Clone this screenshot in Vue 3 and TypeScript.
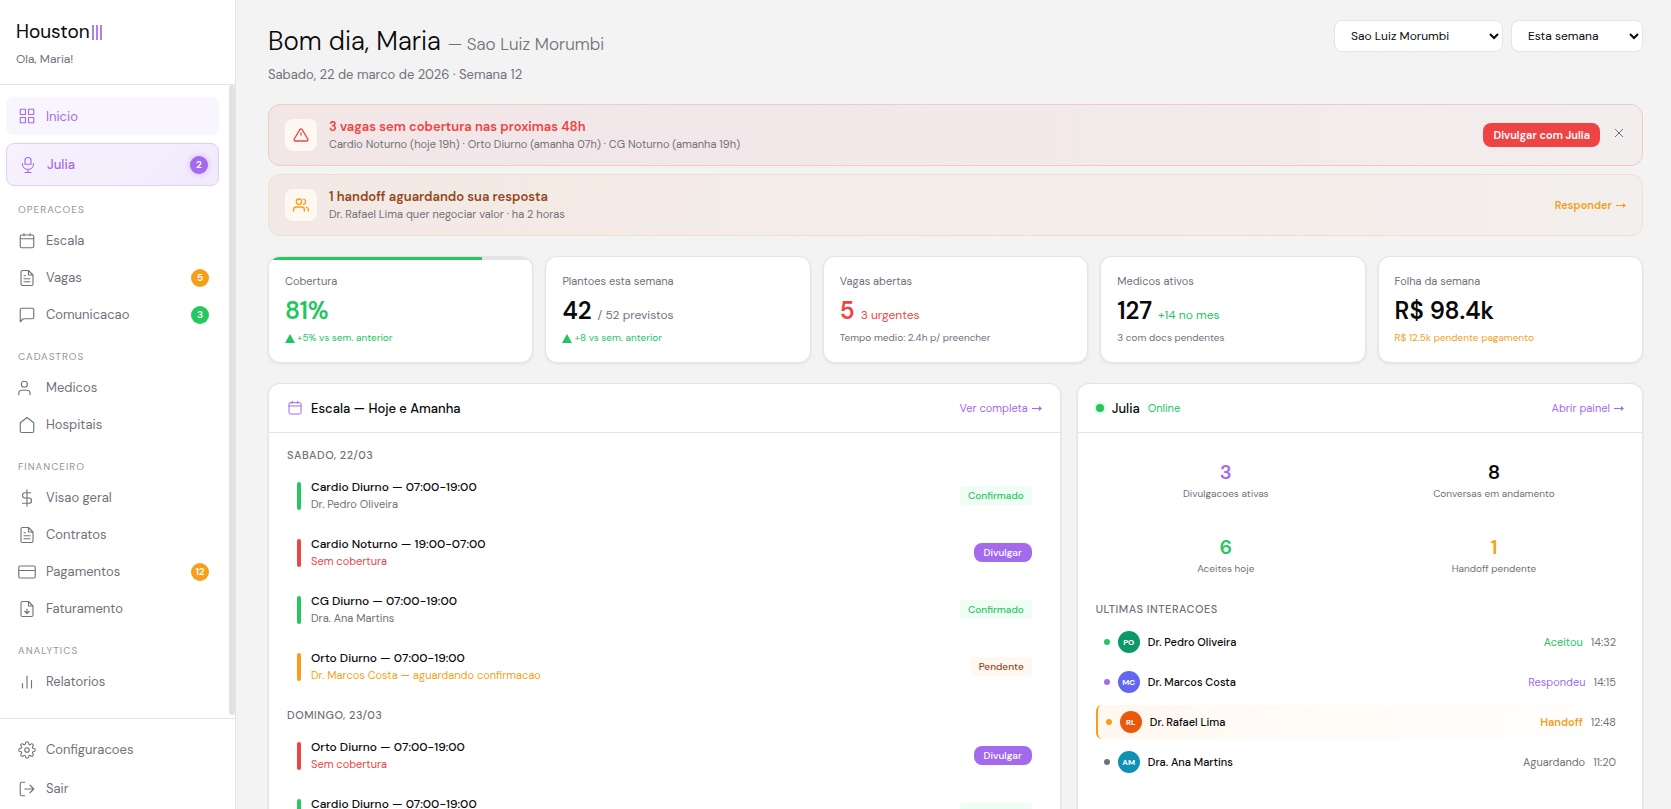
<script setup lang="ts">
import { ref } from 'vue'

interface NavItem {
  label: string
  icon: string
  badge?: string
  tone?: string
}
interface NavGroup {
  title: string
  items: NavItem[]
}
interface Shift {
  title: string
  detail: string
  state: 'ok' | 'open' | 'pending'
}

const icons: Record<string, string> = {
  grid: 'M3 3h7v7H3zM14 3h7v7h-7zM14 14h7v7h-7zM3 14h7v7H3z',
  mic: 'M8 11V6a4 4 0 0 1 8 0v5zM4.500 10c0 5 3.500 8 7.500 8s7.500-3 7.500-8M12 18v4M8 22h8',
  calendar: 'M5 4h14a2 2 0 0 1 2 2v13a2 2 0 0 1-2 2H5a2 2 0 0 1-2-2V6a2 2 0 0 1 2-2zM8 2v3M16 2v3M3 9h18',
  file: 'M14 2H6a2 2 0 0 0-2 2v16a2 2 0 0 0 2 2h12a2 2 0 0 0 2-2V8zM14 2v6h6M16 13H8M16 17H8M10 9H8',
  chat: 'M21 15a2 2 0 0 1-2 2H7l-4 4V5a2 2 0 0 1 2-2h14a2 2 0 0 1 2 2z',
  user: 'M16 21v-2a4 4 0 0 0-4-4H5a4 4 0 0 0-4 4v2M12.500 7a4 4 0 1 1-8 0 4 4 0 0 1 8 0z',
  home: 'M3 9l9-7 9 7v11a2 2 0 0 1-2 2H5a2 2 0 0 1-2-2z',
  dollar: 'M12 1v22M17 5H9.500a3.500 3.500 0 0 0 0 7h5a3.500 3.500 0 0 1 0 7H6',
  card: 'M3 4h18a2 2 0 0 1 2 2v12a2 2 0 0 1-2 2H3a2 2 0 0 1-2-2V6a2 2 0 0 1 2-2zM1 10h22',
  download: 'M14 2H6a2 2 0 0 0-2 2v16a2 2 0 0 0 2 2h12a2 2 0 0 0 2-2V8zM14 2v6h6M12 12v5M9 15l3 3 3-3',
  chart: 'M18 20V10M12 20V4M6 20v-6',
  gear: 'M15 12a3 3 0 1 1-6 0 3 3 0 0 1 6 0zM19.400 15a1.650 1.650 0 0 0 .330 1.820l.060.060a2 2 0 1 1-2.830 2.830l-.060-.060a1.650 1.650 0 0 0-2.820 1.170V21a2 2 0 0 1-4 0v-.090a1.650 1.650 0 0 0-2.900-1.260l-.060.060a2 2 0 1 1-2.830-2.830l.060-.060A1.650 1.650 0 0 0 3.090 14H3a2 2 0 0 1 0-4h.090a1.650 1.650 0 0 0 1.260-2.820l-.060-.060a2 2 0 1 1 2.830-2.830l.060.060A1.650 1.650 0 0 0 10 3.090V3a2 2 0 0 1 4 0v.090a1.650 1.650 0 0 0 2.820 1.260l.060-.060a2 2 0 1 1 2.830 2.830l-.060.060A1.650 1.650 0 0 0 20.910 10H21a2 2 0 0 1 0 4h-.090a1.650 1.650 0 0 0-1.510 1z',
  logout: 'M9 21H5a2 2 0 0 1-2-2V5a2 2 0 0 1 2-2h4M16 17l5-5-5-5M21 12H9',
  alert: 'M10.290 3.860L1.820 18a2 2 0 0 0 1.710 3h16.940a2 2 0 0 0 1.710-3L13.710 3.860a2 2 0 0 0-3.420 0zM12 9v3',
  users: 'M17 21v-2a4 4 0 0 0-4-4H5a4 4 0 0 0-4 4v2M13 7a4 4 0 1 1-8 0 4 4 0 0 1 8 0zM23 21v-2a4 4 0 0 0-3-3.870M16 3.130a4 4 0 0 1 0 7.750',
}

const groups: NavGroup[] = [
  {
    title: 'OPERACOES',
    items: [
      { label: 'Escala', icon: 'calendar' },
      { label: 'Vagas', icon: 'file', badge: '5', tone: 'orange' },
      { label: 'Comunicacao', icon: 'chat', badge: '3', tone: 'green' },
    ],
  },
  {
    title: 'CADASTROS',
    items: [
      { label: 'Medicos', icon: 'user' },
      { label: 'Hospitais', icon: 'home' },
    ],
  },
  {
    title: 'FINANCEIRO',
    items: [
      { label: 'Visao geral', icon: 'dollar' },
      { label: 'Contratos', icon: 'file' },
      { label: 'Pagamentos', icon: 'card', badge: '12', tone: 'orange' },
      { label: 'Faturamento', icon: 'download' },
    ],
  },
  { title: 'ANALYTICS', items: [{ label: 'Relatorios', icon: 'chart' }] },
]

const stats = [
  { label: 'Cobertura', value: '81%', tone: 'green', note: '+5% vs sem. anterior', noteTone: 'green', up: true, bar: 81 },
  { label: 'Plantoes esta semana', value: '42', extra: '/ 52 previstos', note: '+8 vs sem. anterior', noteTone: 'green', up: true },
  { label: 'Vagas abertas', value: '5', tone: 'red', extra: '3 urgentes', extraTone: 'red', note: 'Tempo medio: 2.4h p/ preencher' },
  { label: 'Medicos ativos', value: '127', extra: '+14 no mes', extraTone: 'green', note: '3 com docs pendentes' },
  { label: 'Folha da semana', value: 'R$ 98.4k', note: 'R$ 12.5k pendente pagamento', noteTone: 'orange' },
]

const days: { title: string; shifts: Shift[] }[] = [
  {
    title: 'SABADO, 22/03',
    shifts: [
      { title: 'Cardio Diurno — 07:00-19:00', detail: 'Dr. Pedro Oliveira', state: 'ok' },
      { title: 'Cardio Noturno — 19:00-07:00', detail: 'Sem cobertura', state: 'open' },
      { title: 'CG Diurno — 07:00-19:00', detail: 'Dra. Ana Martins', state: 'ok' },
      { title: 'Orto Diurno — 07:00-19:00', detail: 'Dr. Marcos Costa — aguardando confirmacao', state: 'pending' },
    ],
  },
  {
    title: 'DOMINGO, 23/03',
    shifts: [
      { title: 'Orto Diurno — 07:00-19:00', detail: 'Sem cobertura', state: 'open' },
      { title: 'Cardio Diurno — 07:00-19:00', detail: 'Dr. Pedro Oliveira', state: 'ok' },
    ],
  },
]

const metrics = [
  { value: '3', label: 'Divulgacoes ativas', tone: 'purple' },
  { value: '8', label: 'Conversas em andamento', tone: '' },
  { value: '6', label: 'Aceites hoje', tone: 'green' },
  { value: '1', label: 'Handoff pendente', tone: 'orange' },
]

const contacts = [
  { initials: 'PO', name: 'Dr. Pedro Oliveira', status: 'Aceitou', time: '14:32', tone: 'green', avatar: 'av-green' },
  { initials: 'MC', name: 'Dr. Marcos Costa', status: 'Respondeu', time: '14:15', tone: 'purple', avatar: 'av-indigo' },
  { initials: 'RL', name: 'Dr. Rafael Lima', status: 'Handoff', time: '12:48', tone: 'orange', avatar: 'av-orange', hot: true },
  { initials: 'AM', name: 'Dra. Ana Martins', status: 'Aguardando', time: '11:20', tone: 'gray', avatar: 'av-teal' },
]

const hospital = ref('Sao Luiz Morumbi')
const period = ref('Esta semana')
const showAlert = ref(true)
</script>

<template>
  <div class="app">
    <aside class="sidebar">
      <div class="brand">
        <div class="logo">Houston<span class="bars"><i></i><i></i><i></i></span></div>
        <p class="hello">Ola, Maria!</p>
      </div>
      <div class="nav-area">
        <nav class="nav">
          <a href="#" class="item active">
            <svg class="ico" viewBox="0 0 24 24"><path :d="icons.grid" /></svg>
            <span>Inicio</span>
          </a>
          <a href="#" class="item julia">
            <svg class="ico" viewBox="0 0 24 24"><path :d="icons.mic" /></svg>
            <span>Julia</span>
            <b class="count bg-purple">2</b>
          </a>
          <template v-for="g in groups" :key="g.title">
            <h2 class="group">{{ g.title }}</h2>
            <a v-for="i in g.items" :key="i.label" href="#" class="item">
              <svg class="ico" viewBox="0 0 24 24"><path :d="icons[i.icon]" /></svg>
              <span>{{ i.label }}</span>
              <b v-if="i.badge" class="count" :class="'bg-' + i.tone">{{ i.badge }}</b>
            </a>
          </template>
        </nav>
        <div class="thumb"></div>
      </div>
      <div class="side-foot">
        <a href="#" class="item">
          <svg class="ico" viewBox="0 0 24 24"><path :d="icons.gear" /></svg>
          <span>Configuracoes</span>
        </a>
        <a href="#" class="item">
          <svg class="ico" viewBox="0 0 24 24"><path :d="icons.logout" /></svg>
          <span>Sair</span>
        </a>
      </div>
    </aside>

    <main class="main">
      <header class="top">
        <div>
          <h1>Bom dia, Maria <small>— Sao Luiz Morumbi</small></h1>
          <p class="date">Sabado, 22 de marco de 2026 · Semana 12</p>
        </div>
        <div class="filters">
          <select v-model="hospital" class="wide" aria-label="Hospital">
            <option>Sao Luiz Morumbi</option>
          </select>
          <select v-model="period" aria-label="Periodo">
            <option>Esta semana</option>
          </select>
        </div>
      </header>

      <section v-if="showAlert" class="alert danger">
        <span class="alert-ico"><svg class="ico" viewBox="0 0 24 24"><path :d="icons.alert" /></svg></span>
        <div class="alert-text">
          <h3>3 vagas sem cobertura nas proximas 48h</h3>
          <p>Cardio Noturno (hoje 19h) · Orto Diurno (amanha 07h) · CG Noturno (amanha 19h)</p>
        </div>
        <button type="button" class="cta">Divulgar com Julia</button>
        <button type="button" class="close" aria-label="Fechar" @click="showAlert = false">
          <svg viewBox="0 0 10 10"><path d="M1 1l8 8M9 1l-8 8" /></svg>
        </button>
      </section>
      <section class="alert warn">
        <span class="alert-ico"><svg class="ico" viewBox="0 0 24 24"><path :d="icons.users" /></svg></span>
        <div class="alert-text">
          <h3>1 handoff aguardando sua resposta</h3>
          <p>Dr. Rafael Lima quer negociar valor · ha 2 horas</p>
        </div>
        <a href="#" class="reply">Responder<svg class="arrow" viewBox="0 0 10 7"><path d="M0 3h7v-2l3 2.500-3 2.500V4H0z" /></svg></a>
      </section>

      <section class="stats">
        <article v-for="s in stats" :key="s.label" class="card stat">
          <div v-if="s.bar" class="progress"><div :style="{ width: s.bar + '%' }"></div></div>
          <p class="stat-label">{{ s.label }}</p>
          <p class="stat-value" :class="s.tone">{{ s.value }}<span v-if="s.extra" :class="s.extraTone || 'gray'">{{ s.extra }}</span></p>
          <p class="stat-note" :class="s.noteTone || 'gray'">
            <svg v-if="s.up" class="up" viewBox="0 0 10 9"><path d="M5 0l5 9H0z" /></svg>{{ s.note }}
          </p>
        </article>
      </section>

      <section class="panels">
        <article class="card">
          <header class="panel-head">
            <svg class="ico small purple" viewBox="0 0 24 24"><path :d="icons.calendar" /></svg>
            <h2>Escala — Hoje e Amanha</h2>
            <a href="#">Ver completa<svg class="arrow" viewBox="0 0 10 7"><path d="M0 3h7v-2l3 2.500-3 2.500V4H0z" /></svg></a>
          </header>
          <div class="panel-body">
            <template v-for="d in days" :key="d.title">
              <h3 class="caption">{{ d.title }}</h3>
              <div v-for="s in d.shifts" :key="s.title" class="shift" :class="s.state">
                <i class="mark"></i>
                <div>
                  <h4>{{ s.title }}</h4>
                  <p>{{ s.detail }}</p>
                </div>
                <button v-if="s.state === 'open'" type="button" class="divulgar">Divulgar</button>
                <span v-else class="tag">{{ s.state === 'ok' ? 'Confirmado' : 'Pendente' }}</span>
              </div>
            </template>
          </div>
        </article>

        <article class="card">
          <header class="panel-head">
            <i class="live"></i>
            <h2>Julia</h2>
            <span class="online">Online</span>
            <a href="#">Abrir painel<svg class="arrow" viewBox="0 0 10 7"><path d="M0 3h7v-2l3 2.500-3 2.500V4H0z" /></svg></a>
          </header>
          <div class="panel-body">
            <div class="metrics">
              <div v-for="m in metrics" :key="m.label">
                <strong :class="m.tone">{{ m.value }}</strong>
                <span>{{ m.label }}</span>
              </div>
            </div>
            <h3 class="caption">ULTIMAS INTERACOES</h3>
            <ul class="contacts">
              <li v-for="c in contacts" :key="c.name" :class="{ hot: c.hot }">
                <i class="dot" :class="'bg-' + c.tone"></i>
                <span class="avatar" :class="c.avatar">{{ c.initials }}</span>
                <span class="name">{{ c.name }}</span>
                <span class="status" :class="c.tone">{{ c.status }}</span>
                <time>{{ c.time }}</time>
              </li>
            </ul>
          </div>
        </article>
      </section>
    </main>
  </div>
</template>

<style>
body {
  margin: 0;
  background: #f3f3f3;
}
</style>

<style scoped>
* {
  box-sizing: border-box;
}
.app {
  display: flex;
  height: 100vh;
  overflow: hidden;
  font-family: 'DM Sans', Inter, 'Liberation Sans', sans-serif;
  font-size: 13px;
  color: #09090b;
}
h1, h2, h3, h4, p, ul {
  margin: 0;
  padding: 0;
}
a {
  text-decoration: none;
}
button, select {
  font-family: inherit;
}
.green { color: #22c55e; }
.red { color: #ef4444; }
.orange { color: #f79f1a; }
.purple { color: #a36aec; }
.gray { color: #71717a; }
.bg-green { background: #27c760; }
.bg-orange { background: #f79f1a; }
.bg-purple { background: #a36aec; }
.bg-gray { background: #71717a; }

.ico {
  flex: none;
  width: 18px;
  height: 18px;
  fill: none;
  stroke: currentColor;
  stroke-width: 1.5;
  stroke-linecap: round;
  stroke-linejoin: round;
}
.ico.small {
  width: 16px;
  height: 16px;
}

.sidebar {
  flex: none;
  display: flex;
  flex-direction: column;
  width: 236px;
  background: #fff;
  border-right: 1px solid #e4e4e7;
}
.brand {
  height: 85px;
  padding: 20px 16px 0;
  border-bottom: 1px solid #e4e4e7;
}
.logo {
  display: flex;
  align-items: center;
  font-size: 19px;
  line-height: 24px;
}
.bars {
  display: flex;
  gap: 2px;
  margin-left: 2px;
}
.bars i {
  width: 2px;
  height: 15px;
  background: #b07ef0;
}
.hello {
  margin-top: 7px;
  font-size: 12px;
  line-height: 16px;
  color: #71717a;
}
.nav-area {
  flex: 1;
  display: flex;
  justify-content: space-between;
  min-height: 0;
}
.nav {
  flex: 1;
  padding: 12px 10px 0 6px;
  overflow: hidden;
}
.thumb {
  width: 6px;
  height: 630px;
  border-radius: 3px;
  background: #e2e2e5;
}
.item {
  display: flex;
  align-items: center;
  gap: 10px;
  height: 37px;
  padding: 0 10px 0 12px;
  border-radius: 8px;
  color: #71717a;
  font-size: 13px;
}
.active {
  height: 38px;
  margin-bottom: 8px;
  background: #f8f5fe;
  color: #a36aec;
}
.julia {
  height: 43px;
  border: 1px solid #e0d0f8;
  background: linear-gradient(135deg, #f7f2fe, #f1eafc);
  color: #a36aec;
  font-weight: 500;
}
.count {
  min-width: 18px;
  height: 18px;
  margin-left: auto;
  padding: 0 4px;
  border-radius: 9px;
  color: #fff;
  font-size: 10px;
  font-weight: 600;
  line-height: 18px;
  text-align: center;
}
.julia .count {
  box-shadow: 0 0 6px #cdb0f5;
}
.group {
  height: 36px;
  padding: 17px 12px 0;
  color: #94949c;
  font-size: 10px;
  font-weight: 400;
  line-height: 14px;
  letter-spacing: 1px;
}
.side-foot {
  display: grid;
  align-content: start;
  gap: 2px;
  padding: 12px 6px 0;
  height: 91px;
  border-top: 1px solid #e4e4e7;
}

.main {
  flex: 1;
  min-width: 0;
  padding: 20px 28px 0 32px;
}
.top {
  display: flex;
  justify-content: space-between;
  height: 84px;
}
h1 {
  margin-top: 2px;
  font-size: 26px;
  font-weight: 300;
  line-height: 38px;
}
h1 small {
  color: #71717a;
  font-size: 17px;
}
.date {
  margin-top: 2px;
  color: #71717a;
  line-height: 20px;
}
.filters {
  display: flex;
  align-items: flex-start;
  gap: 8px;
}
select {
  width: 132px;
  height: 32px;
  padding: 0 0 0 12px;
  border: 1px solid #e4e4e7;
  border-radius: 8px;
  background: #fff;
  color: #09090b;
  font-size: 12px;
}
select.wide {
  width: 169px;
}
.alert {
  display: flex;
  align-items: center;
  height: 62px;
  margin-bottom: 8px;
  padding: 0 16px;
  border: 1px solid;
  border-radius: 12px;
}
.danger {
  border-color: #f3c8c9;
  background: linear-gradient(90deg, #f2e6e7, #f3e9ea 55%, #f2eeed);
}
.warn {
  border-color: #f3dfc6;
  background: linear-gradient(90deg, #f3e9e4, #f4ece6 40%, #f3efed);
}
.alert-ico {
  display: grid;
  place-items: center;
  width: 32px;
  height: 32px;
  border-radius: 8px;
  background: #fef8f2;
}
.alert-ico .ico {
  width: 16px;
  height: 16px;
  stroke-width: 2;
}
.danger .alert-ico, .danger h3 { color: #ef4444; }
.warn .alert-ico { color: #f79f1a; }
.warn h3 { color: #92481f; }
.alert-text {
  flex: 1;
  margin-left: 12px;
}
.alert h3 {
  font-size: 13px;
  font-weight: 600;
  line-height: 18px;
}
.alert p {
  color: #71717a;
  font-size: 11px;
  line-height: 17px;
}
.cta {
  height: 24px;
  padding: 0 10px;
  border: 0;
  border-radius: 8px;
  background: #ef4444;
  color: #fff;
  font-size: 11px;
  font-weight: 600;
}
.close {
  display: grid;
  width: 14px;
  height: 18px;
  margin-left: 12px;
  padding: 2px 2px 6px;
  border: 0;
  background: none;
}
.close svg {
  width: 10px;
  height: 10px;
  fill: none;
  stroke: #71717a;
}
.reply {
  color: #f79f1a;
  font-size: 11px;
  font-weight: 600;
}
.arrow {
  width: 10px;
  height: 7px;
  margin-left: 4px;
  fill: currentColor;
}

.card {
  min-width: 0;
  border: 1px solid #e4e4e7;
  border-radius: 12px;
  background: #fff;
  box-shadow: 0 1px 3px rgba(0, 0, 0, 0.08);
  overflow: hidden;
}
.stats {
  display: grid;
  grid-template-columns: repeat(5, 1fr);
  gap: 12px;
  margin-top: 20px;
}
.stat {
  position: relative;
  height: 107px;
  padding: 16px;
}
.progress {
  position: absolute;
  inset: 0 0 auto;
  height: 3px;
  background: #e4e4e7;
}
.progress div {
  height: 3px;
  background: #27c760;
}
.stat-label {
  color: #71717a;
  font-size: 11px;
  line-height: 16px;
}
.stat-value {
  margin-top: 6px;
  font-size: 24px;
  font-weight: 600;
  line-height: 32px;
}
.stat-value span {
  margin-left: 6px;
  font-size: 12px;
  font-weight: 400;
  line-height: 12px;
}
.stat-note {
  display: flex;
  align-items: center;
  gap: 2px;
  margin-top: 4px;
  font-size: 10px;
  line-height: 14px;
}
.up {
  width: 10px;
  height: 9px;
  fill: currentColor;
}

.panels {
  display: grid;
  grid-template-columns: 7fr 5fr;
  gap: 16px;
  margin-top: 20px;
}
.panel-head {
  display: flex;
  align-items: center;
  gap: 8px;
  height: 49px;
  padding: 0 18px;
  border-bottom: 1px solid #e4e4e7;
}
.panel-head h2 {
  font-size: 13px;
  font-weight: 500;
}
.panel-head a {
  margin-left: auto;
  color: #a36aec;
  font-size: 11px;
}
.panel-body {
  padding: 14px 18px;
}
.caption {
  color: #71717a;
  font-size: 11px;
  font-weight: 500;
  line-height: 16px;
  letter-spacing: 0.5px;
}
.shift + .caption {
  margin-top: 12px;
}
.shift {
  display: flex;
  align-items: center;
  height: 57px;
  padding: 0 10px;
}
.caption + .shift {
  margin-top: 4px;
}
.mark {
  width: 4px;
  height: 28px;
  margin-right: 10px;
  border-radius: 2px;
}
.ok .mark { background: #27c760; }
.open .mark { background: #ef4444; }
.pending .mark { background: #f79f1a; }
.shift h4 {
  font-size: 12px;
  font-weight: 500;
  line-height: 17px;
}
.shift p {
  color: #71717a;
  font-size: 11px;
  line-height: 17px;
}
.shift.open p { color: #ef4444; }
.shift.pending p { color: #f79f1a; }
.tag, .divulgar {
  height: 19px;
  margin-left: auto;
  font-size: 10px;
  font-weight: 500;
  line-height: 19px;
}
.tag {
  padding: 0 8px;
  border-radius: 4px;
  background: #f0fdf5;
  color: #27c760;
}
.pending .tag {
  background: #fff8f2;
  color: #92481f;
}
.divulgar {
  padding: 0 10px;
  border: 0;
  border-radius: 8px;
  background: #a36aec;
  color: #fff;
}

.live {
  width: 8px;
  height: 8px;
  border-radius: 50%;
  background: #27c760;
  box-shadow: 0 0 4px #86dfa5;
}
.online {
  color: #22c55e;
  font-size: 11px;
}
.metrics {
  display: grid;
  grid-template-columns: 1fr 1fr;
  gap: 8px;
  margin-bottom: 12px;
}
.metrics div {
  display: flex;
  flex-direction: column;
  align-items: center;
  height: 67px;
  padding-top: 13px;
}
.metrics strong {
  font-size: 20px;
  font-weight: 600;
  line-height: 24px;
}
.metrics span {
  margin-top: 3px;
  color: #71717a;
  font-size: 10px;
  line-height: 14px;
}
.contacts {
  display: grid;
  gap: 6px;
  margin-top: 8px;
  list-style: none;
}
.contacts li {
  display: flex;
  align-items: center;
  gap: 8px;
  height: 34px;
  padding: 0 8px;
  border-radius: 6px;
}
.contacts .hot {
  border-left: 2px solid #f79f1a;
  background: linear-gradient(90deg, #fff8f0, #fff);
}
.dot {
  width: 6px;
  height: 6px;
  border-radius: 50%;
}
.avatar {
  width: 22px;
  height: 22px;
  border-radius: 50%;
  color: #fff;
  font-size: 8px;
  font-weight: 700;
  line-height: 22px;
  text-align: center;
}
.av-green { background: #0b9a66; }
.av-indigo { background: #6366f1; }
.av-orange { background: #ea580c; }
.av-teal { background: #0e91b5; }
.name {
  font-size: 11px;
  font-weight: 500;
}
.status {
  margin-left: auto;
  font-size: 11px;
}
.hot .status {
  font-weight: 600;
}
time {
  color: #71717a;
  font-size: 11px;
}
</style>
